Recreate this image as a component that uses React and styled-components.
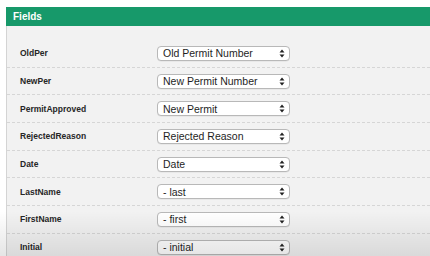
import React from 'react';
import styled, { createGlobalStyle } from 'styled-components';

const GlobalStyle = createGlobalStyle`
  html, body {
    margin: 0;
    padding: 0;
    background: #ffffff;
    font-family: "Liberation Sans", Arial, sans-serif;
  }
`;

const fields = [
  { label: 'OldPer', value: 'Old Permit Number' },
  { label: 'NewPer', value: 'New Permit Number' },
  { label: 'PermitApproved', value: 'New Permit' },
  { label: 'RejectedReason', value: 'Rejected Reason' },
  { label: 'Date', value: 'Date' },
  { label: 'LastName', value: '- last' },
  { label: 'FirstName', value: '- first' },
  { label: 'Initial', value: '- initial' },
];

const Page = styled.div`
  position: relative;
  height: 256px;
  overflow: hidden;
  padding: 7px 0 0 6px;
  box-sizing: border-box;
`;

const Panel = styled.div`
  border-left: 1px solid #d4d4d4;
  background: #f2f2f2;
  height: 100%;
`;

const Header = styled.div`
  height: 19px;
  background: #17996a;
  color: #ffffff;
  font-size: 10px;
  font-weight: bold;
  line-height: 19px;
  padding-left: 7px;
  margin-left: -1px;
`;

const List = styled.div`
  padding-top: 14px;
`;

const Row = styled.div`
  display: grid;
  grid-template-columns: 150px 133px;
  align-items: center;
  height: 26.7px;
  border-bottom: 1px dashed #d6d6d6;
`;

const Label = styled.div`
  padding-left: 13px;
  font-size: 8.5px;
  font-weight: bold;
  color: #262626;
`;

const Select = styled.div`
  display: flex;
  align-items: center;
  justify-content: space-between;
  height: 15px;
  box-sizing: border-box;
  border: 1px solid #b8b8b8;
  border-radius: 4px;
  background: #ffffff;
  padding: 0 4px 0 5px;
  font-size: 10.5px;
  color: #1e1e1e;
  box-shadow: 0 0.5px 0.5px rgba(0, 0, 0, 0.08);
`;

const Shade = styled.div`
  position: absolute;
  left: 0;
  right: 0;
  bottom: 0;
  height: 45px;
  pointer-events: none;
  background: linear-gradient(to bottom, rgba(0, 0, 0, 0), rgba(0, 0, 0, 0.1));
`;

const Arrows = () => (
  <svg width="6" height="9" viewBox="0 0 6 9">
    <path d="M3 0.5 L5.5 3.5 L0.5 3.5 Z" fill="#222" />
    <path d="M3 8.5 L5.5 5.5 L0.5 5.5 Z" fill="#222" />
  </svg>
);

const App = () => (
  <>
    <GlobalStyle />
    <Page>
      <Panel>
        <Header>Fields</Header>
        <List>
          {fields.map(f => (
            <Row key={f.label}>
              <Label>{f.label}</Label>
              <Select>
                <span>{f.value}</span>
                <Arrows />
              </Select>
            </Row>
          ))}
        </List>
      </Panel>
      <Shade />
    </Page>
  </>
);

export default App;
